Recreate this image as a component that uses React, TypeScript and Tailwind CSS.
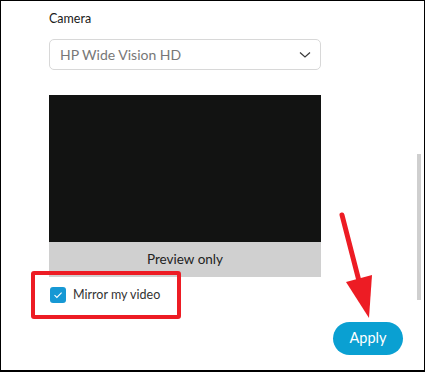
import React from "react";

export default function App() {
  return (
    <div
      className="relative w-[425px] h-[372px] bg-white border border-black border-b-2 overflow-hidden"
      style={{ fontFamily: 'Lato, "Noto Sans", sans-serif' }}
    >
      <div className="flex flex-col pl-[48px] pr-[21px] pt-[9px]">
        <div className="w-[272px] h-[18px] text-[12.5px] leading-[18px] text-[#1a1a1a]">Camera</div>
        <div className="mt-[11px] w-[272px] h-[31px] rounded-[5px] border border-[#d8d8d8] flex items-center justify-between pl-[10px] pr-[10px]">
          <span className="text-[14px] text-[#777777] leading-none">HP Wide Vision HD</span>
          <svg width="12" height="8" viewBox="0 0 12 8" className="mr-[-1px]">
            <path d="M1 1.5 L6 6 L11 1.5" fill="none" stroke="#3a3a3a" strokeWidth="1.2" />
          </svg>
        </div>
        <div className="mt-[25px] w-[272px] h-[147px] bg-[#121312]" />
        <div className="w-[272px] h-[35px] bg-[#d0d0d0] flex items-center justify-center text-[13.5px] text-[#222222]">
          Preview only
        </div>
        <div className="mt-[10px] ml-[1px] flex items-center gap-[7px] h-[16px]">
          <div className="w-[16px] h-[16px] rounded-[3px] bg-[#1698d4] flex items-center justify-center">
            <svg width="10" height="8" viewBox="0 0 10 8">
              <path d="M1.5 4.2 L3.9 6.4 L8.6 1.6" fill="none" stroke="#ffffff" strokeWidth="1.1" />
            </svg>
          </div>
          <span className="text-[12.5px] text-[#333333] leading-none">Mirror my video</span>
        </div>
        <div className="mt-[19px] flex justify-end">
          <button className="w-[70px] h-[33px] rounded-full bg-[#0aa0d2] text-white text-[14.5px] leading-none flex items-center justify-center">
            Apply
          </button>
        </div>
      </div>

      <div className="absolute left-[416px] top-[153px] w-[4px] h-[146px] bg-[#cfcfcf]" />

      <div className="absolute left-[30px] top-[270px] w-[150px] h-[48px] border-4 border-[#ed1c24] rounded-[3px]" />

      <svg className="absolute -left-px -top-px w-[425px] h-[372px] pointer-events-none" viewBox="0 0 425 372">
        <line x1="342" y1="215" x2="359" y2="281" stroke="#ed1c24" strokeWidth="5" strokeLinecap="round" />
        <polygon points="346,282 372,275 369,318" fill="#ed1c24" />
      </svg>
    </div>
  );
}
